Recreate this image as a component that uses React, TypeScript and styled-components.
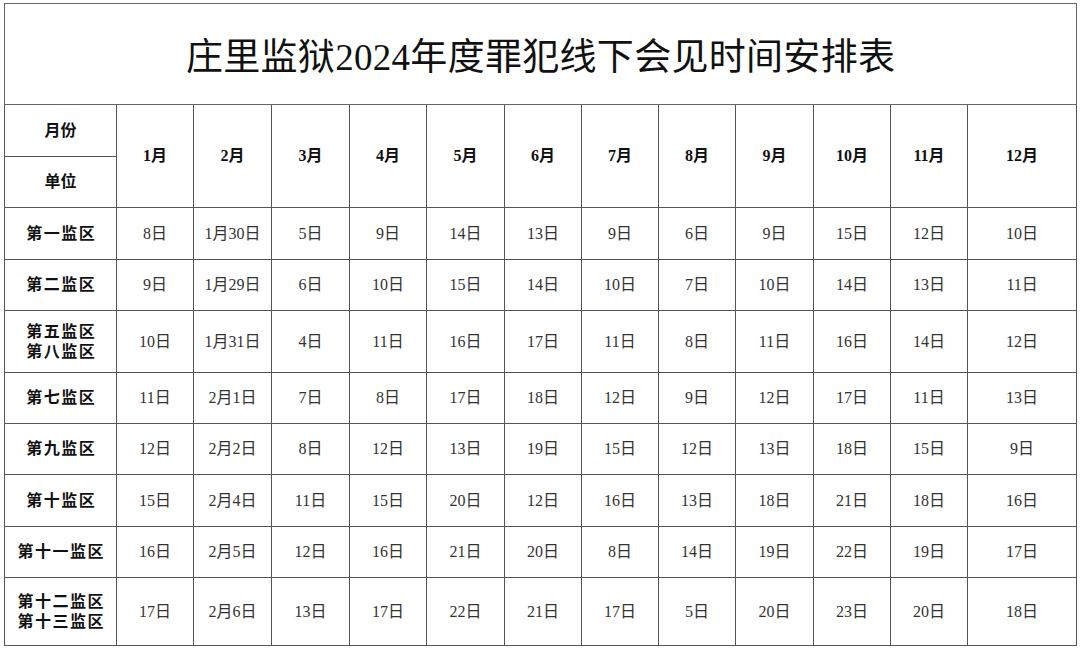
import styled, { createGlobalStyle } from 'styled-components';

const GlobalStyle = createGlobalStyle`
    html, body {
        margin: 0;
        padding: 0;
        background: #ffffff;
    }
    body {
        font-family: "Liberation Serif", "Noto Sans CJK SC", serif;
    }
`;

const Page = styled.div`
    padding: 3px 4px 0 4px;
`;

const Table = styled.table`
    border-collapse: collapse;
    table-layout: fixed;
    width: 1072px;
    color: #222;
`;

const Cell = styled.td<{ $h?: number; $bold?: boolean }>`
    border: 1px solid #555;
    padding: 0;
    height: ${(p) => (p.$h ? `${p.$h}px` : 'auto')};
    text-align: center;
    vertical-align: middle;
    font-size: 16px;
    line-height: 20px;
    font-weight: ${(p) => (p.$bold ? 700 : 400)};
    color: ${(p) => (p.$bold ? '#111' : '#333')};
`;

const UnitLine = styled.div`
    letter-spacing: 1.5px;
    padding-left: 1.5px;
`;

const TitleCell = styled.td`
    border: 1px solid #666;
    height: 100px;
    padding: 0;
    text-align: center;
    vertical-align: middle;
    font-size: 37px;
    color: #111;
    letter-spacing: 0.3px;
`;

const monthWidths = [77, 78, 78, 77, 78, 77, 77, 77, 78, 77, 77, 109];
const months = ['1月', '2月', '3月', '4月', '5月', '6月', '7月', '8月', '9月', '10月', '11月', '12月'];

const rows: { unit: string[]; h: number; days: string[] }[] = [
    { unit: ['第一监区'], h: 51, days: ['8日', '1月30日', '5日', '9日', '14日', '13日', '9日', '6日', '9日', '15日', '12日', '10日'] },
    { unit: ['第二监区'], h: 50, days: ['9日', '1月29日', '6日', '10日', '15日', '14日', '10日', '7日', '10日', '14日', '13日', '11日'] },
    { unit: ['第五监区', '第八监区'], h: 61, days: ['10日', '1月31日', '4日', '11日', '16日', '17日', '11日', '8日', '11日', '16日', '14日', '12日'] },
    { unit: ['第七监区'], h: 50, days: ['11日', '2月1日', '7日', '8日', '17日', '18日', '12日', '9日', '12日', '17日', '11日', '13日'] },
    { unit: ['第九监区'], h: 50, days: ['12日', '2月2日', '8日', '12日', '13日', '19日', '15日', '12日', '13日', '18日', '15日', '9日'] },
    { unit: ['第十监区'], h: 51, days: ['15日', '2月4日', '11日', '15日', '20日', '12日', '16日', '13日', '18日', '21日', '18日', '16日'] },
    { unit: ['第十一监区'], h: 50, days: ['16日', '2月5日', '12日', '16日', '21日', '20日', '8日', '14日', '19日', '22日', '19日', '17日'] },
    { unit: ['第十二监区', '第十三监区'], h: 67, days: ['17日', '2月6日', '13日', '17日', '22日', '21日', '17日', '5日', '20日', '23日', '20日', '18日'] },
];

export default function App() {
    return (
        <Page>
            <GlobalStyle />
            <Table>
                <colgroup>
                    <col style={{ width: 112 }} />
                    {monthWidths.map((w, i) => (
                        <col key={i} style={{ width: w }} />
                    ))}
                </colgroup>
                <tbody>
                    <tr>
                        <TitleCell colSpan={13}>庄里监狱2024年度罪犯线下会见时间安排表</TitleCell>
                    </tr>
                    <tr>
                        <Cell $h={51} $bold>月份</Cell>
                        {months.map((m) => (
                            <Cell key={m} rowSpan={2} $bold>
                                {m}
                            </Cell>
                        ))}
                    </tr>
                    <tr>
                        <Cell $h={50} $bold>单位</Cell>
                    </tr>
                    {rows.map((r) => (
                        <tr key={r.unit.join()}>
                            <Cell $h={r.h} $bold>
                                {r.unit.map((u) => (
                                    <UnitLine key={u}>{u}</UnitLine>
                                ))}
                            </Cell>
                            {r.days.map((d, i) => (
                                <Cell key={i}>{d}</Cell>
                            ))}
                        </tr>
                    ))}
                </tbody>
            </Table>
        </Page>
    );
}
